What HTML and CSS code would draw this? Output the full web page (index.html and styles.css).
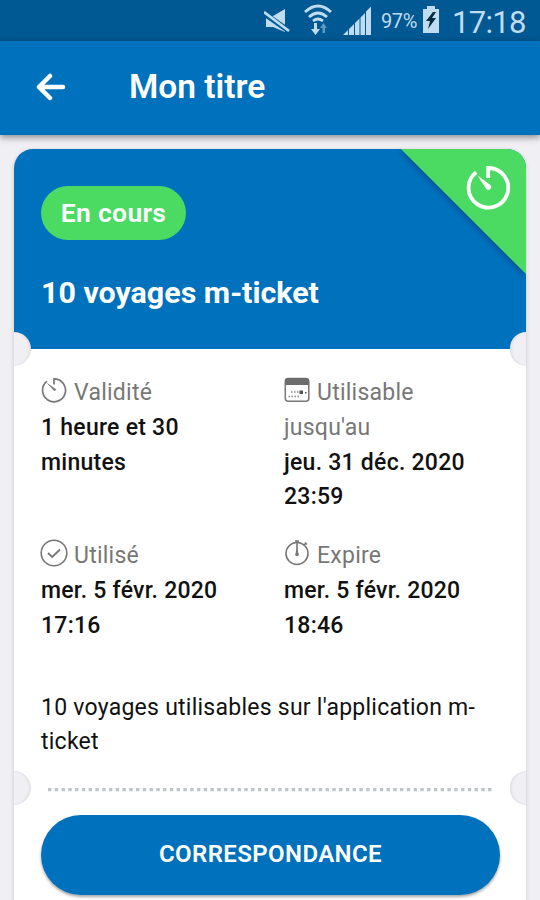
FILE: index.html
```
<!DOCTYPE html>
<html lang="fr">
<head>
<meta charset="utf-8">
<title>Mon titre</title>
<link rel="stylesheet" href="styles.css">
</head>
<body>
<div class="status">
  <svg class="mute" width="27" height="25" viewBox="0 0 27 25"><path d="M2 7h7l12-7v23L9 18H2z" fill="#c0dcf0"/><path d="M0 4.500l25 17.500" stroke="#005993" stroke-width="5.500"/><path d="M0 3l25 19" stroke="#c0dcf0" stroke-width="2.800"/></svg>
  <svg class="wifi" width="28" height="31" viewBox="0 0 28 31"><g fill="none" stroke="#c0dcf0" stroke-width="2.8"><path d="M1 8q13-12 26 0M5 13q9-8 18 0M9 17q5-4 10 0"/></g><path d="M10 19h3v6h3l-4.500 6L7 25h3z" fill="#c0dcf0"/><path d="M18.500 29v-5H16l3.500-5 3.500 5h-2v5z" fill="#5f98c1"/></svg>
  <svg class="signal" width="29" height="29" viewBox="0 0 29 29"><path d="M0 29l5-5v5zM6 23l5-5v11H6zM12 17l4.500-4.500V29H12zM17.500 11.500l4.500-4.500v22h-4.500zM23 5.500l5-5V29h-5z" fill="#c0dcf0"/></svg>
  <span class="percent">97%</span>
  <svg class="battery" width="18" height="27" viewBox="0 0 18 27"><path d="M1 3h4V0h8v3h4v24H1z" fill="#c0dcf0"/><path d="M11 6L4 15h4l-2 8 8-11h-4l4-6z" fill="#072a43"/></svg>
  <span class="clock">17:18</span>
</div>
<header class="appbar">
  <svg class="back" width="30" height="28" viewBox="0 0 30 28"><path d="M14 3L3 14l11 11M3 14h24" fill="none" stroke="#fff" stroke-width="4.500" stroke-linecap="round" stroke-linejoin="round"/></svg>
  <h1>Mon titre</h1>
</header>
<main class="card">
  <section class="hero">
    <svg class="corner" width="126" height="130" viewBox="0 0 126 130">
      <defs><filter id="shade" x="-20%" y="-20%" width="140%" height="140%"><feDropShadow dx="-1" dy="2" stdDeviation="2.500" flood-color="#002b55" flood-opacity=".5"/></filter></defs>
      <path d="M1 0H126V125z" fill="#4cdb62" filter="url(#shade)"/>
      <path d="M88.200 29V19A19.800 19.800 0 1 1 76.200 23.200" fill="none" stroke="#fff" stroke-width="3.800"/>
      <path d="M77.500 26.500l12.800 9.500a2.700 2.700 0 0 1-4 4z" fill="#fff"/>
    </svg>
    <span class="pill">En cours</span>
    <h2>10 voyages m-ticket</h2>
  </section>
  <section class="details">
    <i class="notch left"></i><i class="notch right"></i>
    <div class="grid">
      <div>
        <div class="label"><svg width="26" height="26" viewBox="0 0 26 26"><path d="M13 7.500V1.800A11.500 11.500 0 1 1 6 4.200" fill="none" stroke="#777" stroke-width="1.700"/><path d="M6.500 6.500l8.500 6-1.500 1.500z" fill="#777" stroke="#777" stroke-width=".5"/></svg><span>Validité</span></div>
        <div class="value">1 heure et 30<br>minutes</div>
      </div>
      <div>
        <div class="label"><svg width="26" height="26" viewBox="0 0 26 26"><rect x="1.300" y="1.500" width="23.500" height="22.800" rx="3" fill="#fff" stroke="#777" stroke-width="1.500"/><path d="M1 8V4q0-3 3-3h18q3 0 3 3v4z" fill="#6c6c6c"/><path d="M7 15h12M4.500 19.500h12" stroke="#888" stroke-width="1.500" stroke-dasharray="1.500 1.500"/><path d="M15.500 13.500h3.500v3.500h-3.500zM21 15h1.500v1.500H21z" fill="#555"/></svg><span>Utilisable</span></div>
        <div class="label">jusqu'au</div>
        <div class="value">jeu. 31 déc. 2020<br>23:59</div>
      </div>
      <div>
        <div class="label"><svg class="check" width="28" height="28" viewBox="0 0 28 28"><g fill="none" stroke="#777" stroke-width="1.600"><circle cx="14" cy="14" r="12.800"/><path d="M8 14l4.200 4L20 10.500" stroke-width="1.900"/></g></svg><span>Utilisé</span></div>
        <div class="value">mer. 5 févr. 2020<br>17:16</div>
      </div>
      <div>
        <div class="label"><svg width="26" height="26" viewBox="0 0 26 26"><g fill="none" stroke="#777" stroke-width="1.600"><circle cx="13" cy="13.500" r="11"/><path d="M13 1v13M11 1h4M20 5l2.500-2M21 2.500l2 2"/></g><path d="M13 8l1.800 6.500a1.800 1.800 0 1 1-3.600 0z" fill="#777"/></svg><span>Expire</span></div>
        <div class="value">mer. 5 févr. 2020<br>18:46</div>
      </div>
    </div>
    <p class="note">10 voyages utilisables sur l'application m-<br>ticket</p>
  </section>
  <section class="action">
    <i class="notch left"></i><i class="notch right"></i>
    <svg class="dots" width="446" height="4" viewBox="0 0 446 4"><path d="M0 1.600h446" stroke="#bfc4c7" stroke-width="3.200" stroke-dasharray="3.400 3.370"/></svg>
    <button>CORRESPONDANCE</button>
  </section>
</main>
</body>
</html>
```
FILE: styles.css
```
* { box-sizing: border-box; }
html, body { height: 100%; }
body { margin: 0; overflow: hidden; background: #efeff4; font-family: Roboto, "Liberation Sans", sans-serif; color: #111; display: flex; flex-direction: column; }
svg { display: block; flex: none; }
h1, h2, p { margin: 0; white-space: nowrap; }
.status { height: 41px; flex: none; background: #005993; color: #c0dcf0; display: flex; align-items: flex-start; padding-left: 264px; white-space: nowrap; }
.mute { margin-top: 9px; }
.wifi { margin: 4px 0 0 13px; }
.signal { margin: 6px 0 0 11px; }
.percent { width: 36px; margin: 9px 0 0 9px; font-size: 20px; line-height: 25px; letter-spacing: -.4px; }
.battery { margin: 6px 0 0 5px; }
.clock { margin: 4px 0 0 12px; font-size: 31px; line-height: 38px; letter-spacing: -.7px; }
.appbar { position: relative; height: 94px; flex: none; background: #0071bc; color: #fff; display: flex; align-items: center; padding: 0 0 2px 36px; box-shadow: 0 2px 7px rgba(0,0,0,.45); }
.appbar h1 { margin-left: 63px; font-size: 33.500px; line-height: 40px; font-weight: 600; }
.card { margin: 14px 14px 0; height: 780px; flex: none; border-radius: 19px; background: #fff; box-shadow: 0 1px 4px rgba(0,0,0,.16); }
.hero { position: relative; height: 200px; border-radius: 19px 19px 0 0; overflow: hidden; background: #0071bc; color: #fff; padding: 37px 27px 0; }
.corner { position: absolute; right: 0; top: 0; width: 126px; overflow: visible; }
.pill { display: block; width: 145px; height: 54px; border-radius: 27px; background: #4cdb62; text-align: center; font-size: 26.500px; line-height: 54px; font-weight: 600; letter-spacing: .3px; }
.hero h2 { margin-top: 33px; font-size: 30.400px; line-height: 40px; font-weight: 700; }
.details { position: relative; height: 439px; padding: 27px 27px 0; font-size: 23px; line-height: 34.800px; letter-spacing: .25px; }
.notch { position: absolute; top: -17px; width: 17px; height: 34px; background: #efeff4; }
.left { left: 0; border-radius: 0 17px 17px 0; box-shadow: inset -2px 0 2px rgba(0,0,0,.06); }
.right { right: 0; width: 16px; border-radius: 17px 0 0 17px; box-shadow: inset 2px 0 2px rgba(0,0,0,.06); }
.grid { display: grid; grid-template-columns: 243px 215px; row-gap: 24px; }
.label { display: flex; gap: 7px; color: #777; white-space: nowrap; }
.label svg { margin-top: 1px; }
.label .check { margin: 0 -1px; }
.value { font-weight: 500; white-space: nowrap; }
.note { margin-top: 47px; }
.action { position: relative; padding: 0 27px; }
.dots { margin-left: 7px; }
button { display: block; width: 459px; height: 80px; margin-top: 23px; padding: 0 0 3px; border: 0; border-radius: 40px; background: #0071bc; color: #fff; font: 600 24px/40px Roboto, "Liberation Sans", sans-serif; letter-spacing: .4px; box-shadow: 0 2px 3px rgba(0,0,0,.35); }
```
